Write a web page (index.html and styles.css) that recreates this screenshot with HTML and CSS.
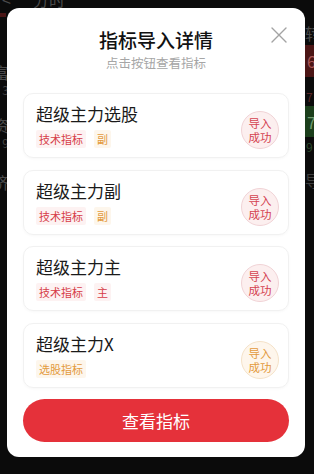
FILE: index.html
```html
<!DOCTYPE html>
<html lang="zh-CN">
<head>
<meta charset="utf-8">
<title>指标导入详情</title>
<link rel="stylesheet" href="styles.css">
</head>
<body>
<div class="app">
  <div class="topbar"><span class="back">&lt;</span><span class="apptitle">分时</span></div>
  <div class="bg">
    <div class="col-left">
      <div class="bar"></div>
      <div class="name n1">富</div>
      <div class="num k1">3</div>
      <div class="name n2">资</div>
      <div class="num k1">9</div>
      <div class="name n3">济</div>
    </div>
    <div class="col-right">
      <div class="name r1">转</div>
      <div class="cell red">6</div>
      <div class="num rnum r2">7</div>
      <div class="cell green">7</div>
      <div class="num gnum r3">9</div>
      <div class="name r4">导</div>
    </div>
  </div>
</div>

<div class="overlay">
  <div class="modal">
    <div class="header">
      <div class="title">指标导入详情</div>
      <div class="subtitle">点击按钮查看指标</div>
      <svg class="close" width="16" height="16" viewBox="0 0 16 16"><path d="M1 1L15 15M15 1L1 15" stroke="#a3a3a3" stroke-width="1.4" fill="none" stroke-linecap="round"/></svg>
    </div>
    <div class="list">
      <div class="card">
        <div class="info">
          <div class="name-title">超级主力选股</div>
          <div class="tags"><span class="tag tag-red">技术指标</span><span class="tag tag-orange">副</span></div>
        </div>
        <div class="badge badge-red">导入<br>成功</div>
      </div>
      <div class="card">
        <div class="info">
          <div class="name-title">超级主力副</div>
          <div class="tags"><span class="tag tag-red">技术指标</span><span class="tag tag-orange">副</span></div>
        </div>
        <div class="badge badge-red">导入<br>成功</div>
      </div>
      <div class="card">
        <div class="info">
          <div class="name-title">超级主力主</div>
          <div class="tags"><span class="tag tag-red">技术指标</span><span class="tag tag-red">主</span></div>
        </div>
        <div class="badge badge-red">导入<br>成功</div>
      </div>
      <div class="card">
        <div class="info">
          <div class="name-title">超级主力X</div>
          <div class="tags"><span class="tag tag-orange">选股指标</span></div>
        </div>
        <div class="badge badge-orange">导入<br>成功</div>
      </div>
    </div>
    <button class="btn">查看指标</button>
  </div>
</div>
</body>
</html>
```

FILE: styles.css
```css
* { box-sizing: border-box; }
html, body {
  margin: 0;
  padding: 0;
  width: 314px;
  height: 474px;
  overflow: hidden;
  background: #0b0b0b;
  font-family: "Noto Sans CJK SC", "Noto Sans", sans-serif;
}
.app {
  position: relative;
  height: 474px;
}
.topbar {
  height: 8px;
  overflow: hidden;
  display: flex;
  gap: 22px;
  color: #4a4a4a;
  font-size: 16px;
  line-height: 8px;
  padding-left: 2px;
}
.back, .apptitle { display: block; transform: translateY(-5px); }
.bg {
  display: flex;
  justify-content: space-between;
}
.col-left {
  width: 7px;
  display: flex;
  flex-direction: column;
  align-items: flex-end;
  overflow: visible;
}
.col-right {
  width: 9px;
  display: flex;
  flex-direction: column;
  align-items: flex-start;
}
.bar {
  margin-top: 5px;
  width: 6px;
  height: 4px;
  background: #4a1616;
  align-self: flex-start;
}
.name {
  font-size: 16px;
  line-height: 20px;
  color: #4a4a4a;
  white-space: nowrap;
}
.num {
  font-size: 12px;
  line-height: 14px;
  color: #444;
  white-space: nowrap;
}
.col-left .name, .col-left .num { margin-right: -2px; }
.n1 { margin-top: 45px; }
.k1 { margin-top: 1px; }
.n2 { margin-top: 18px; }
.n3 { margin-top: 22px; }
.r1 { margin-top: 15px; }
.cell {
  width: 9px;
  padding-left: 2px;
  font-size: 16px;
  margin-top: 2px;
  display: flex;
  align-items: center;
  white-space: nowrap;
}
.red { height: 32px; background: #4b1515; color: #a85555; }
.green { height: 31px; background: #1b3e1b; color: #6e9a6e; }
.rnum { color: #5a2626; padding-left: 1px; }
.gnum { color: #2c4a2c; padding-left: 1px; }
.r2 { margin-top: 13px; }
.r3 { margin-top: 3px; }
.r4 { margin-top: 16px; color: #3e3e3e; }

.overlay {
  position: absolute;
  inset: 0;
  padding: 8px 9px 0 7px;
}
.modal {
  width: 298px;
  background: #fff;
  border-radius: 12px;
  padding: 19px 16px 15px;
  display: flex;
  flex-direction: column;
}
.header {
  position: relative;
  display: flex;
  flex-direction: column;
  align-items: center;
}
.title {
  font-size: 19px;
  line-height: 26px;
  font-weight: 500;
  color: #111;
}
.subtitle {
  margin-top: 1px;
  font-size: 12.5px;
  line-height: 18px;
  color: #a6a6a6;
}
.close {
  position: absolute;
  right: 2px;
  top: 0px;
}
.list {
  margin-top: 21px;
  display: flex;
  flex-direction: column;
  gap: 11.5px;
}
.card {
  height: 65px;
  border: 1px solid #f1f1f1;
  border-radius: 10px;
  padding: 8px 9px 0 12px;
  display: flex;
  justify-content: space-between;
  align-items: flex-start;
  box-shadow: 0 1px 3px rgba(0,0,0,0.03);
}
.info { display: flex; flex-direction: column; }
.name-title {
  font-size: 17px;
  line-height: 24px;
  color: #1a1a1a;
}
.tags {
  margin-top: 4px;
  display: flex;
  gap: 8px;
}
.tag {
  font-size: 11px;
  line-height: 18px;
  padding: 0 3px;
  border-radius: 2px;
}
.tag-red { color: #d63c47; background: #fdf2f2; }
.tag-orange { color: #e39a3c; background: #fdf6ec; }
.badge {
  margin-top: 9px;
  width: 38px;
  height: 38px;
  border-radius: 50%;
  display: flex;
  align-items: center;
  justify-content: center;
  text-align: center;
  font-size: 11.5px;
  line-height: 14px;
}
.badge-red { background: #fcefef; border: 1px solid #f1d3d6; color: #d4434f; }
.badge-orange { background: #fef6ec; border: 1px solid #f5e2c8; color: #e39a3c; }
.btn {
  margin-top: 11.5px;
  height: 43px;
  border: none;
  border-radius: 22px;
  background: #e5313a;
  color: #fff;
  font-family: inherit;
  font-size: 17px;
  display: flex;
  align-items: center;
  justify-content: center;
}
```
